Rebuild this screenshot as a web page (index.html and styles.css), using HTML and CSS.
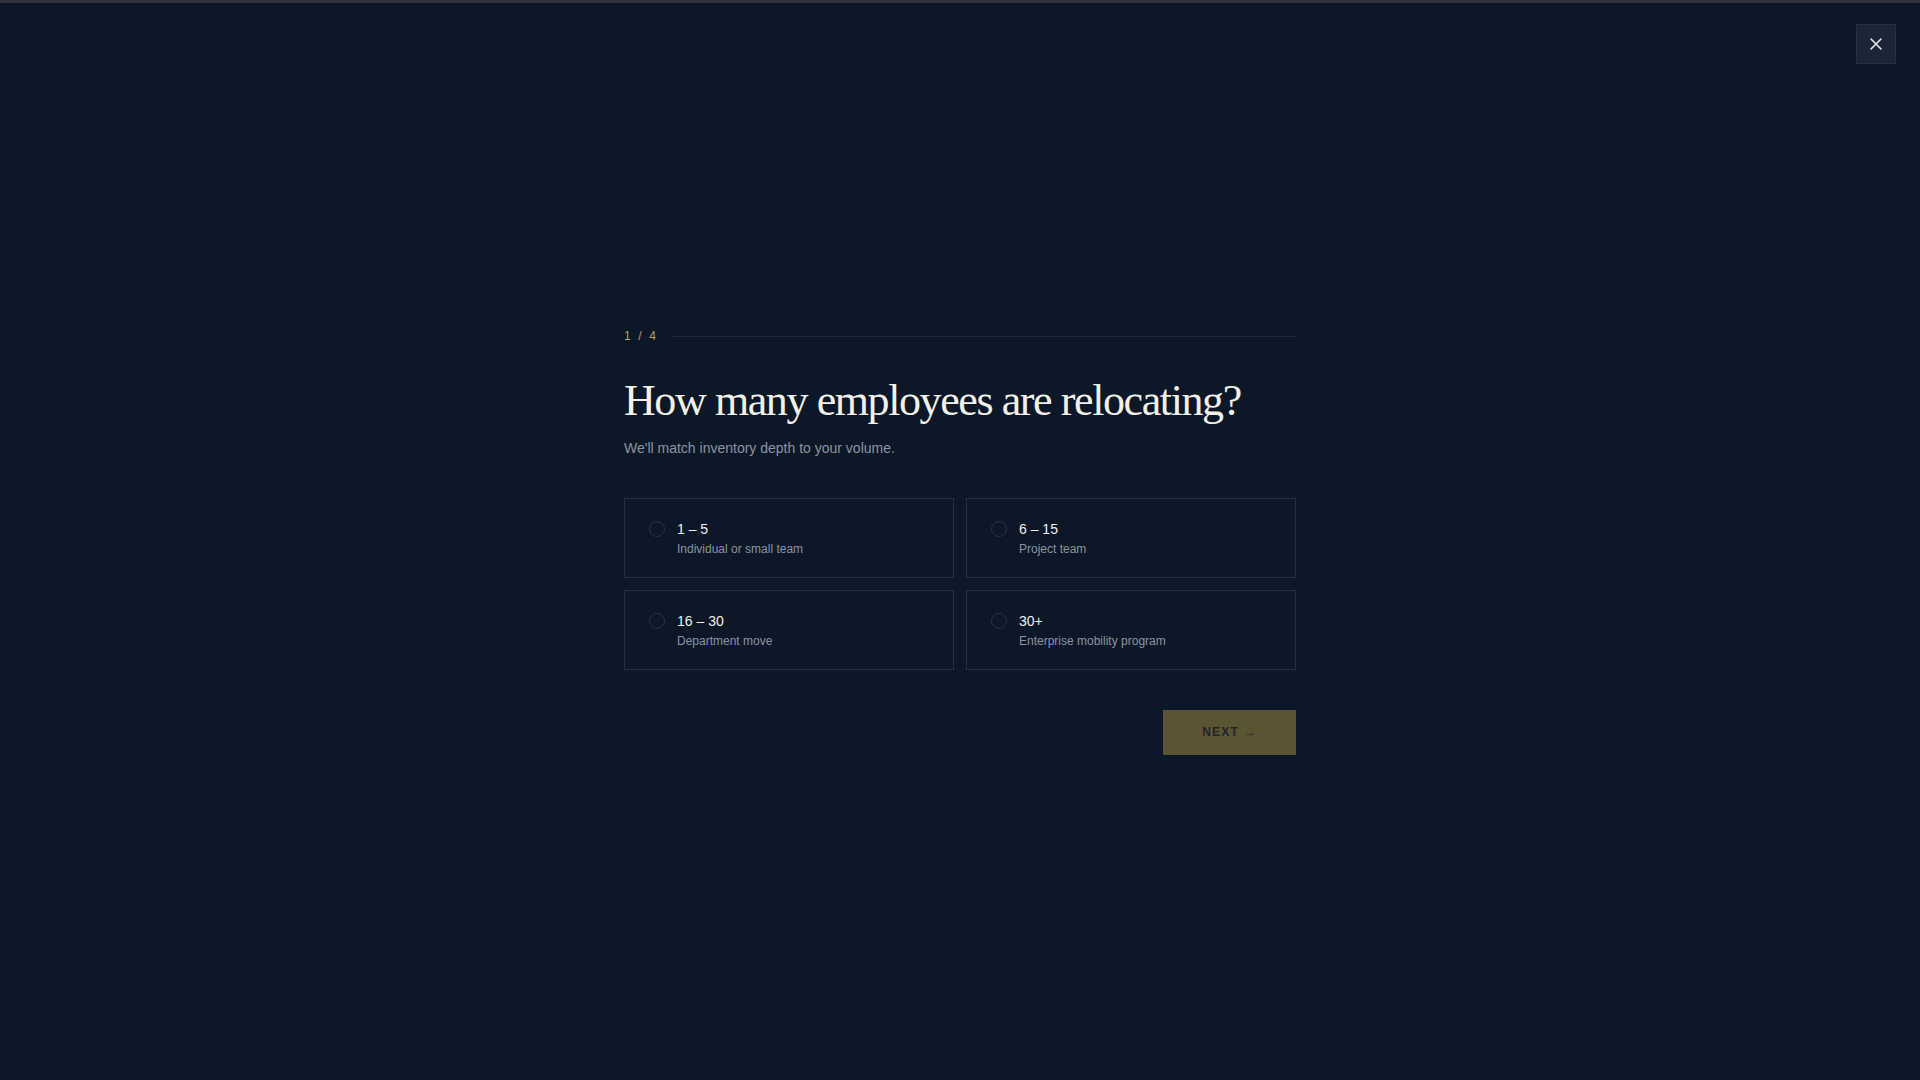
FILE: index.html
```html
<!DOCTYPE html>
<html lang="en">
<head>
<meta charset="utf-8">
<title>Relocation quiz</title>
<link rel="stylesheet" href="styles.css">
</head>
<body>
<div class="topbar"></div>
<button class="close" aria-label="Close">
  <svg width="16" height="16" viewBox="0 0 16 16" fill="none" stroke="currentColor" stroke-width="1.6" stroke-linecap="round"><path d="M3 3l10 10M13 3L3 13"/></svg>
</button>
<main class="stage">
  <section class="quiz">
    <div class="progress">
      <span class="step">1 / 4</span>
      <span class="rule"></span>
    </div>
    <h1 class="title">How many employees are relocating?</h1>
    <p class="lead">We'll match inventory depth to your volume.</p>
    <div class="options">
      <label class="option">
        <span class="radio"></span>
        <span class="text"><span class="label">1 – 5</span><span class="desc">Individual or small team</span></span>
      </label>
      <label class="option">
        <span class="radio"></span>
        <span class="text"><span class="label">6 – 15</span><span class="desc">Project team</span></span>
      </label>
      <label class="option">
        <span class="radio"></span>
        <span class="text"><span class="label">16 – 30</span><span class="desc">Department move</span></span>
      </label>
      <label class="option">
        <span class="radio"></span>
        <span class="text"><span class="label">30+</span><span class="desc">Enterprise mobility program</span></span>
      </label>
    </div>
    <div class="actions">
      <button class="next">NEXT →</button>
    </div>
  </section>
</main>
</body>
</html>
```

FILE: styles.css
```css
* { box-sizing: border-box; }
html, body { margin: 0; padding: 0; }
body {
  background: #0c1828;
  color: #f1eee8;
  font-family: "Liberation Sans", Arial, sans-serif;
  min-height: 100vh;
}
.topbar {
  height: 3px;
  background: #30343a;
}
.close {
  position: absolute;
  top: 24px;
  right: 24px;
  width: 40px;
  height: 40px;
  display: flex;
  align-items: center;
  justify-content: center;
  background: #1a2535;
  border: 1px solid #263244;
  color: #e8e8ea;
  padding: 0;
}
.stage {
  min-height: calc(100vh - 3px);
  display: flex;
  align-items: center;
  justify-content: center;
}
.quiz {
  width: 672px;
}
.progress {
  display: flex;
  align-items: center;
  gap: 14px;
}
.step {
  font-size: 12px;
  letter-spacing: 0.18em;
  color: #bb9f5e;
  line-height: 16px;
}
.rule {
  flex: 1;
  height: 1px;
  background: #1d2838;
}
.title {
  font-family: "Liberation Serif", "Times New Roman", serif;
  font-weight: 400;
  font-size: 44px;
  letter-spacing: -0.032em;
  line-height: 1.15;
  margin: 32px 0 0;
  color: #f3f0ea;
}
.lead {
  margin: 11px 0 0;
  font-size: 14px;
  line-height: 20px;
  color: #8c94a0;
}
.options {
  margin-top: 40px;
  display: grid;
  grid-template-columns: 1fr 1fr;
  gap: 12px;
}
.option {
  display: flex;
  align-items: flex-start;
  gap: 12px;
  height: 80px;
  padding: 20px 24px 22px;
  border: 1px solid #243044;
  background: #0c1727;
}
.radio {
  flex: none;
  width: 16px;
  height: 16px;
  margin-top: 2px;
  border-radius: 50%;
  border: 1.5px solid #26324a;
}
.text {
  display: flex;
  flex-direction: column;
  gap: 2px;
}
.label {
  font-size: 14px;
  line-height: 20px;
  color: #f3f1ec;
}
.desc {
  font-size: 12px;
  line-height: 16px;
  color: #8c94a0;
}
.actions {
  margin-top: 40px;
  display: flex;
  justify-content: flex-end;
}
.next {
  width: 133px;
  height: 45px;
  border: none;
  background: #5a5435;
  color: #1f2429;
  font-family: "Liberation Sans", Arial, sans-serif;
  font-weight: 700;
  font-size: 12px;
  letter-spacing: 0.1em;
}
```
